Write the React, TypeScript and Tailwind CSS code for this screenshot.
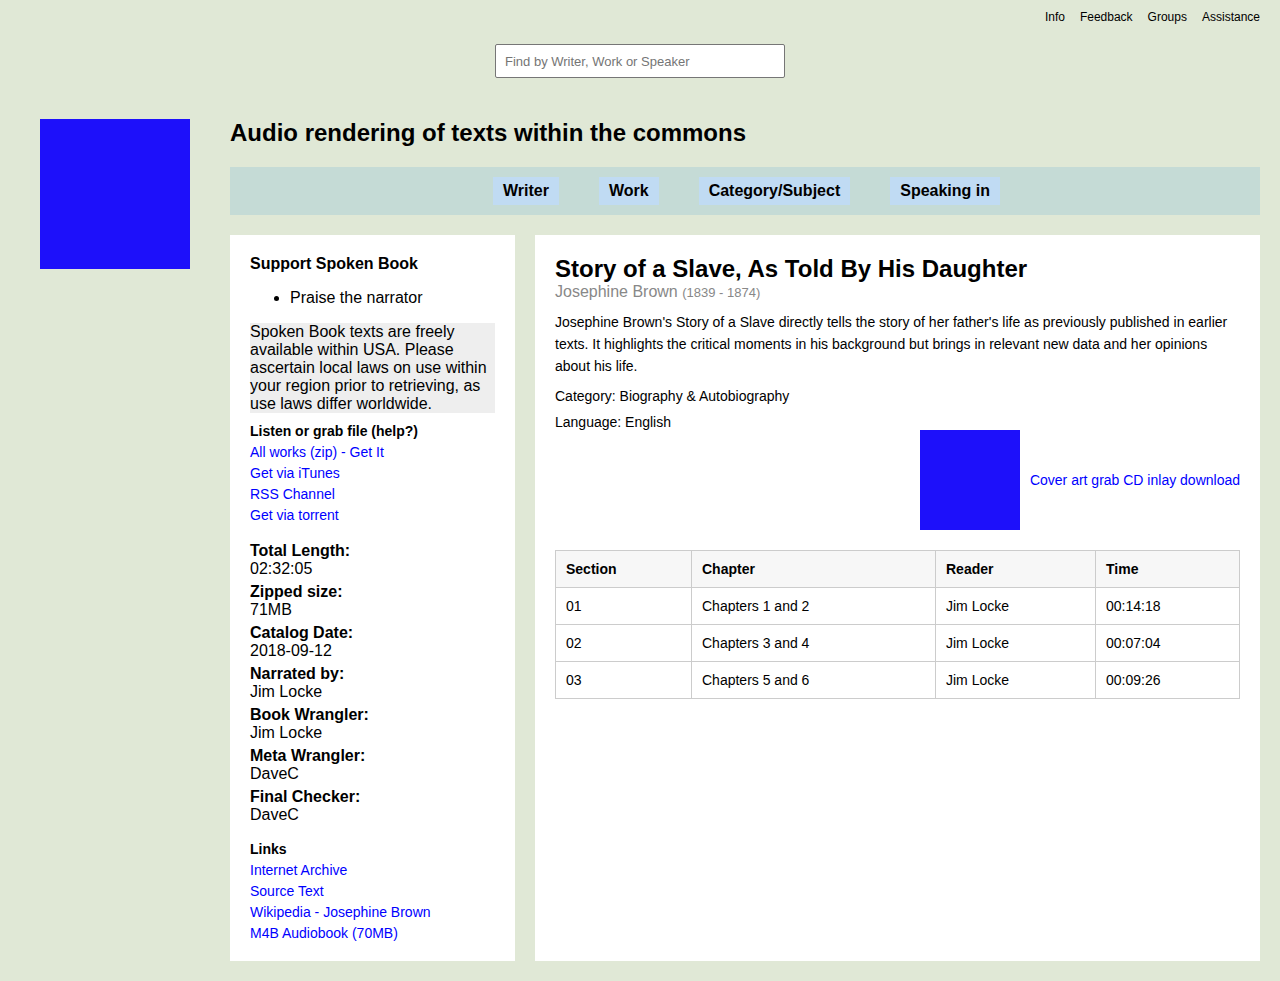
import React from "react";

const links1 = ["All works (zip) - Get It", "Get via iTunes", "RSS Channel", "Get via torrent"];
const links2 = ["Internet Archive", "Source Text", "Wikipedia - Josephine Brown", "M4B Audiobook (70MB)"];
const meta: [string, string][] = [
  ["Total Length:", "02:32:05"],
  ["Zipped size:", "71MB"],
  ["Catalog Date:", "2018-09-12"],
  ["Narrated by:", "Jim Locke"],
  ["Book Wrangler:", "Jim Locke"],
  ["Meta Wrangler:", "DaveC"],
  ["Final Checker:", "DaveC"],
];
const rows = [
  ["01", "Chapters 1 and 2", "Jim Locke", "00:14:18"],
  ["02", "Chapters 3 and 4", "Jim Locke", "00:07:04"],
  ["03", "Chapters 5 and 6", "Jim Locke", "00:09:26"],
];

export default function App() {
  return (
    <div
      className="min-h-[981px] bg-[#e0e8d6] text-black"
      style={{ fontFamily: '"Liberation Sans", Arial, sans-serif' }}
    >
      <div className="flex justify-end gap-[15px] pr-5 pt-[9px] text-[12px] leading-[16px]">
        <a>Info</a>
        <a>Feedback</a>
        <a>Groups</a>
        <a>Assistance</a>
      </div>
      <div className="flex justify-center pt-[19px]">
        <input
          placeholder="Find by Writer, Work or Speaker"
          className="h-[34px] w-[290px] border border-[#767676] bg-white px-[9px] text-[13px] placeholder:text-[#757575] outline-none rounded-[2px]"
        />
      </div>
      <div className="flex pt-[41px] pb-5">
        <div className="w-[230px] shrink-0 pl-10">
          <div className="h-[150px] w-[150px] bg-[#1d10fa]" />
        </div>
        <div className="flex-1 pr-5">
          <h1 className="text-[24px] font-bold leading-[28px] pt-0">Audio rendering of texts within the commons</h1>
          <div className="mt-[20px] flex h-[48px] items-center justify-center gap-10 bg-[#c5dbd6] pl-[3px]">
            {["Writer", "Work", "Category/Subject", "Speaking in"].map((t) => (
              <span key={t} className="bg-[#c0dbf3] px-[10px] text-[16px] font-bold leading-[28px]">
                {t}
              </span>
            ))}
          </div>
          <div className="mt-5 flex gap-5">
            <div className="w-[285px] shrink-0 bg-white px-5 pt-[20px] pb-[17px]">
              <div className="text-[16px] font-bold leading-[18px]">Support Spoken Book</div>
              <ul className="mt-[16px] list-disc pl-10 text-[16px] leading-[18px]">
                <li>Praise the narrator</li>
              </ul>
              <div className="mt-[16px] bg-[#eeeeee] text-[16px] leading-[18px]">
                Spoken Book texts are freely available within USA. Please ascertain local laws on use within your region prior to retrieving, as use laws differ worldwide.
              </div>
              <div className="mt-[10px] text-[14px] font-bold leading-[16px]">Listen or grab file (help?)</div>
              <div className="mt-[3px] flex flex-col text-[14px] leading-[21px] text-[#0000ff]">
                {links1.map((l) => (
                  <a key={l}>{l}</a>
                ))}
              </div>
              <div className="mt-[16px] flex flex-col gap-[5px] text-[16px] leading-[18px]">
                {meta.map(([k, v]) => (
                  <div key={k}>
                    <div className="font-bold">{k}</div>
                    <div>{v}</div>
                  </div>
                ))}
              </div>
              <div className="mt-[17px] text-[14px] font-bold leading-[16px]">Links</div>
              <div className="mt-[3px] flex flex-col text-[14px] leading-[21px] text-[#0000ff]">
                {links2.map((l) => (
                  <a key={l}>{l}</a>
                ))}
              </div>
            </div>
            <div className="flex-1 bg-white px-5 pt-[21px]">
              <h2 className="text-[24px] font-bold leading-[26px]">Story of a Slave, As Told By His Daughter</h2>
              <div className="text-[16px] leading-[18px] pt-[1px] text-[#888888]">
                Josephine Brown <span className="text-[13px]">(1839 - 1874)</span>
              </div>
              <p className="mt-[9px] text-[14px] leading-[22px]">
                Josephine Brown's Story of a Slave directly tells the story of her father's life as previously published in earlier texts. It highlights the critical moments in his background but brings in relevant new data and her opinions about his life.
              </p>
              <div className="mt-[10px] text-[14px] leading-[18px]">Category: Biography &amp; Autobiography</div>
              <div className="mt-[8px] text-[14px] leading-[18px]">Language: English</div>
              <div className="-mt-[1px] flex items-center justify-end gap-[10px]">
                <div className="h-[100px] w-[100px] bg-[#1d10fa]" />
                <a className="text-[14px] text-[#0000ff]">Cover art grab CD inlay download</a>
              </div>
              <table className="mt-5 w-full border-collapse text-[14px]">
                <thead>
                  <tr className="bg-[#f7f7f7]">
                    <th className="h-[37px] w-[136px] border border-[#cccccc] px-[10px] text-left font-bold">Section</th>
                    <th className="w-[244px] border border-[#cccccc] px-[10px] text-left font-bold">Chapter</th>
                    <th className="w-[160px] border border-[#cccccc] px-[10px] text-left font-bold">Reader</th>
                    <th className="border border-[#cccccc] px-[10px] text-left font-bold">Time</th>
                  </tr>
                </thead>
                <tbody>
                  {rows.map((r) => (
                    <tr key={r[0]}>
                      {r.map((c, i) => (
                        <td key={i} className="h-[37px] border border-[#cccccc] px-[10px]">
                          {c}
                        </td>
                      ))}
                    </tr>
                  ))}
                </tbody>
              </table>
            </div>
          </div>
        </div>
      </div>
    </div>
  );
}
